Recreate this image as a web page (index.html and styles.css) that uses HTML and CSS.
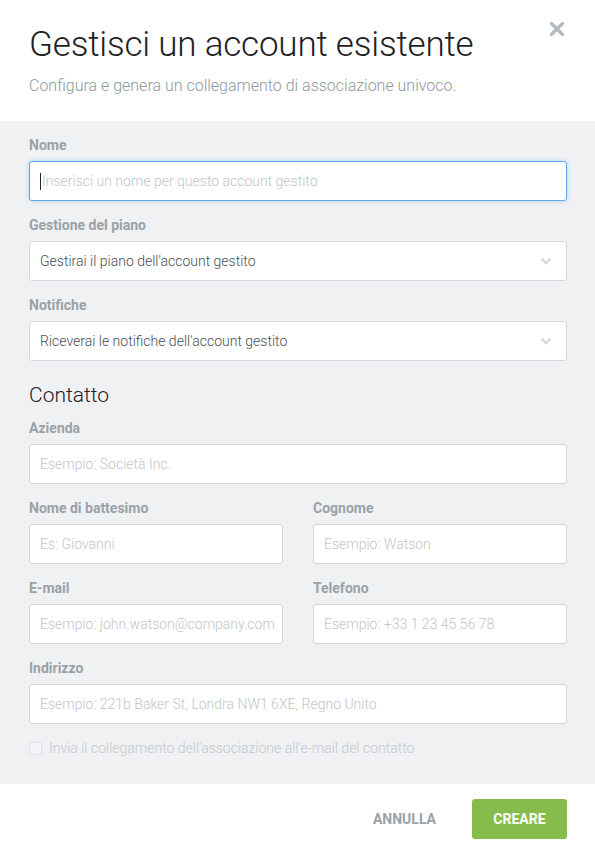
FILE: index.html
```html
<!DOCTYPE html>
<html lang="it">
<head>
  <meta charset="UTF-8">
  <meta name="viewport" content="width=device-width, initial-scale=1.0">
  <title>Gestisci un account esistente</title>
  <link rel="stylesheet" href="styles.css">
</head>
<body>
  <div class="modal">
    <header class="modal-header">
      <h1>Gestisci un account esistente</h1>
      <p class="subtitle">Configura e genera un collegamento di associazione univoco.</p>
      <button class="close-btn" aria-label="Chiudi">
        <svg width="16" height="16" viewBox="0 0 16 16">
          <path d="M2.5 2.5 L13.5 13.5 M13.5 2.5 L2.5 13.5" stroke="currentColor" stroke-width="3.4" stroke-linecap="round"/>
        </svg>
      </button>
    </header>

    <form class="modal-body">
      <div class="field">
        <label>Nome</label>
        <div class="input focused"><span class="caret"></span><span class="placeholder">Inserisci un nome per questo account gestito</span></div>
      </div>

      <div class="field">
        <label>Gestione del piano</label>
        <div class="input select">
          <span class="value">Gestirai il piano dell'account gestito</span>
          <svg class="chevron" width="12" height="8" viewBox="0 0 12 8"><path d="M1.5 1.5 L6 6 L10.5 1.5" fill="none" stroke="currentColor" stroke-width="2.4"/></svg>
        </div>
      </div>

      <div class="field">
        <label>Notifiche</label>
        <div class="input select">
          <span class="value">Riceverai le notifiche dell'account gestito</span>
          <svg class="chevron" width="12" height="8" viewBox="0 0 12 8"><path d="M1.5 1.5 L6 6 L10.5 1.5" fill="none" stroke="currentColor" stroke-width="2.4"/></svg>
        </div>
      </div>

      <h2 class="section-title">Contatto</h2>

      <div class="field first">
        <label>Azienda</label>
        <div class="input"><span class="placeholder">Esempio: Società Inc.</span></div>
      </div>

      <div class="row">
        <div class="field">
          <label>Nome di battesimo</label>
          <div class="input"><span class="placeholder">Es: Giovanni</span></div>
        </div>
        <div class="field">
          <label>Cognome</label>
          <div class="input"><span class="placeholder">Esempio: Watson</span></div>
        </div>
      </div>

      <div class="row">
        <div class="field">
          <label>E-mail</label>
          <div class="input"><span class="placeholder">Esempio: john.watson@company.com</span></div>
        </div>
        <div class="field">
          <label>Telefono</label>
          <div class="input"><span class="placeholder">Esempio: +33 1 23 45 56 78</span></div>
        </div>
      </div>

      <div class="field">
        <label>Indirizzo</label>
        <div class="input"><span class="placeholder">Esempio: 221b Baker St, Londra NW1 6XE, Regno Unito</span></div>
      </div>

      <div class="check-row">
        <span class="checkbox"></span>
        <span>Invia il collegamento dell'associazione all'e-mail del contatto</span>
      </div>
    </form>

    <footer class="modal-footer">
      <button class="btn-cancel">ANNULLA</button>
      <button class="btn-create">CREARE</button>
    </footer>
  </div>
</body>
</html>
```

FILE: styles.css
```css
body {
  margin: 0;
  padding: 0;
  background: #fff;
  font-family: Roboto, "Liberation Sans", sans-serif;
  color: #222;
}

.modal {
  width: 595px;
  height: 852px;
  background: #fff;
  display: flex;
  flex-direction: column;
}

.modal-header {
  position: relative;
  padding: 24px 29px 0;
  height: 97px;
}

.modal-header h1 {
  margin: 0;
  font-size: 35px;
  font-weight: 300;
  line-height: 42px;
  color: #1f2224;
  letter-spacing: -0.2px;
}

.subtitle {
  margin: 10px 0 0;
  font-size: 16px;
  font-weight: 300;
  line-height: 20px;
  color: #8e989e;
}

.close-btn {
  position: absolute;
  top: 21px;
  right: 30px;
  width: 16px;
  height: 16px;
  padding: 0;
  border: none;
  background: none;
  color: #b3bbc0;
  cursor: pointer;
}

.close-btn svg {
  display: block;
}

.modal-body {
  background: #f0f1f3;
  padding: 16px 28px 28px 29px;
  display: flex;
  flex-direction: column;
}

.field {
  display: flex;
  flex-direction: column;
  min-width: 0;
  margin-top: 16px;
}

.modal-body > .field:first-child {
  margin-top: 0;
}

.field.first {
  margin-top: 13px;
}

.field label {
  font-size: 14px;
  font-weight: 700;
  line-height: 16px;
  color: #9aa2a7;
  margin-bottom: 8px;
}

.input {
  height: 40px;
  box-sizing: border-box;
  border: 1px solid #d3d7da;
  border-radius: 3px;
  background: #fff;
  padding: 0 10px;
  display: flex;
  align-items: center;
  font-size: 14px;
  font-weight: 300;
  white-space: nowrap;
  overflow: hidden;
}

.input.focused {
  border-color: #5ea8e8;
  box-shadow: 0 0 4px rgba(94, 168, 232, 0.45);
}

.caret {
  width: 1px;
  height: 17px;
  background: #222;
  margin-right: 1px;
}

.placeholder {
  color: #bfc5c9;
}

.select {
  justify-content: space-between;
}

.select .value {
  color: #4a4f53;
}

.chevron {
  color: #d4d8db;
  margin-right: 4px;
}

.section-title {
  margin: 22px 0 0;
  font-size: 21px;
  font-weight: 300;
  line-height: 24px;
  color: #222;
}

.row {
  display: grid;
  grid-template-columns: minmax(0, 1fr) minmax(0, 1fr);
  column-gap: 30px;
}

.check-row {
  display: flex;
  align-items: center;
  gap: 7px;
  margin-top: 16px;
  height: 16px;
  font-size: 14px;
  font-weight: 300;
  color: #c3c8cc;
}

.checkbox {
  width: 11px;
  height: 11px;
  border: 1px solid #dfe2e4;
  border-radius: 2px;
  background: #f4f5f6;
}

.modal-footer {
  display: flex;
  justify-content: flex-end;
  align-items: center;
  gap: 36px;
  padding: 15px 28px 0 29px;
}

.btn-cancel,
.btn-create {
  font-family: Roboto, "Liberation Sans", sans-serif;
  font-size: 14px;
  font-weight: 700;
  border: none;
  cursor: pointer;
  padding: 0;
}

.btn-cancel {
  background: none;
  color: #9aa2a7;
}

.btn-create {
  background: #86bc4b;
  color: #fff;
  width: 95px;
  height: 40px;
  border-radius: 3px;
}
```
